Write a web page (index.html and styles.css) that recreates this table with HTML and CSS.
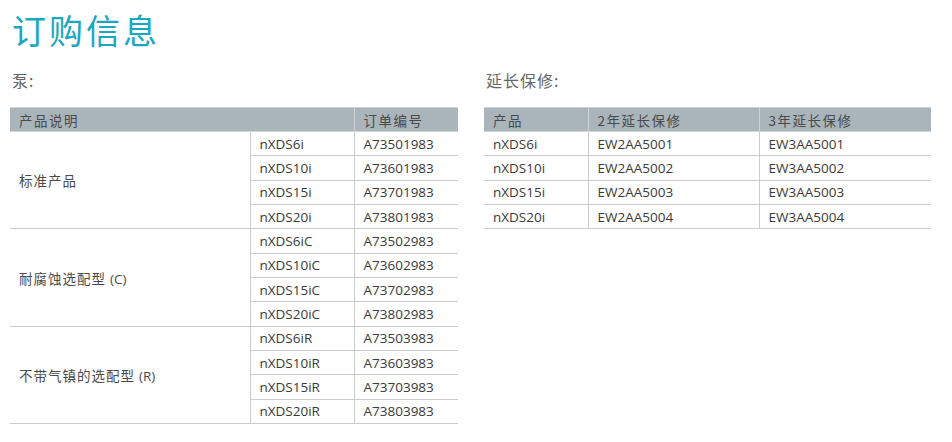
FILE: index.html
```html
<!DOCTYPE html>
<html lang="zh-CN">
<head>
<meta charset="utf-8">
<title>订购信息</title>
<link rel="stylesheet" href="styles.css">
</head>
<body>
<div class="page">
  <h1 class="title">订购信息</h1>
  <div class="columns">
    <section class="block block-left">
      <h2 class="heading">泵:</h2>
      <table class="tbl">
        <colgroup><col class="c1"><col class="c2"><col class="c3"></colgroup>
        <thead>
          <tr><th colspan="2">产品说明</th><th class="sep">订单编号</th></tr>
        </thead>
        <tbody>
          <tr class="grp"><td rowspan="4" class="desc">标准产品</td><td class="sep">nXDS6i</td><td class="sep">A73501983</td></tr>
          <tr><td class="sep">nXDS10i</td><td class="sep">A73601983</td></tr>
          <tr><td class="sep">nXDS15i</td><td class="sep">A73701983</td></tr>
          <tr><td class="sep">nXDS20i</td><td class="sep">A73801983</td></tr>
          <tr class="grp"><td rowspan="4" class="desc">耐腐蚀选配型 <span class="lat">(C)</span></td><td class="sep">nXDS6iC</td><td class="sep">A73502983</td></tr>
          <tr><td class="sep">nXDS10iC</td><td class="sep">A73602983</td></tr>
          <tr><td class="sep">nXDS15iC</td><td class="sep">A73702983</td></tr>
          <tr><td class="sep">nXDS20iC</td><td class="sep">A73802983</td></tr>
          <tr class="grp"><td rowspan="4" class="desc">不带气镇的选配型 <span class="lat">(R)</span></td><td class="sep">nXDS6iR</td><td class="sep">A73503983</td></tr>
          <tr><td class="sep">nXDS10iR</td><td class="sep">A73603983</td></tr>
          <tr><td class="sep">nXDS15iR</td><td class="sep">A73703983</td></tr>
          <tr><td class="sep">nXDS20iR</td><td class="sep">A73803983</td></tr>
        </tbody>
      </table>
    </section>
    <section class="block block-right">
      <h2 class="heading">延长保修:</h2>
      <table class="tbl">
        <colgroup><col class="r1"><col class="r2"><col class="r3"></colgroup>
        <thead>
          <tr><th>产品</th><th class="sep">2年延长保修</th><th class="sep">3年延长保修</th></tr>
        </thead>
        <tbody>
          <tr><td>nXDS6i</td><td class="sep">EW2AA5001</td><td class="sep">EW3AA5001</td></tr>
          <tr><td>nXDS10i</td><td class="sep">EW2AA5002</td><td class="sep">EW3AA5002</td></tr>
          <tr><td>nXDS15i</td><td class="sep">EW2AA5003</td><td class="sep">EW3AA5003</td></tr>
          <tr><td>nXDS20i</td><td class="sep">EW2AA5004</td><td class="sep">EW3AA5004</td></tr>
        </tbody>
      </table>
    </section>
  </div>
</div>
</body>
</html>
```

FILE: styles.css
```css
html, body {
  margin: 0;
  padding: 0;
  background: #ffffff;
}

.page {
  padding: 10px 0 0 10px;
  font-family: "Open Sans", "Noto Sans CJK SC", sans-serif;
  color: #3f3f3f;
}

.title {
  margin: 0 0 0 2px;
  font-family: "Noto Sans CJK SC", sans-serif;
  font-weight: 400;
  font-size: 34px;
  line-height: 40px;
  letter-spacing: 3px;
  color: #1ba7c1;
}

.columns {
  display: flex;
  gap: 26px;
  margin-top: 20px;
}

.block-left { width: 448px; }
.block-right { width: 447px; }

.heading {
  margin: 0 0 0 2px;
  font-family: "Noto Sans CJK SC", sans-serif;
  font-weight: 400;
  font-size: 16px;
  line-height: 20px;
  letter-spacing: 1px;
  color: #666666;
}

.tbl {
  margin-top: 17px;
  width: 100%;
  border-collapse: collapse;
  table-layout: fixed;
  font-size: 13.5px;
}

.c1 { width: 240px; }
.c2 { width: 104px; }
.c3 { width: 104px; }
.r1 { width: 104px; }
.r2 { width: 171px; }
.r3 { width: 172px; }

.tbl th {
  background: #a9b4bb;
  border-top: 1px solid #cdd3d7;
  border-bottom: 1px solid #cdd3d7;
  height: 23px;
  padding: 0 9px;
  text-align: left;
  font-family: "Noto Sans CJK SC", sans-serif;
  font-weight: 400;
  font-size: 13.5px;
  letter-spacing: 1.5px;
  color: #4a4a4a;
}

.tbl th.sep {
  border-left: 1px solid #cdd3d7;
}

.tbl td {
  height: 23.35px;
  padding: 0 9px;
  border-bottom: 1px solid #cccccc;
  text-align: left;
  vertical-align: middle;
  color: #3a3a3a;
  white-space: nowrap;
}

.tbl td.sep {
  border-left: 1px solid #cccccc;
}

.tbl td.desc {
  font-family: "Noto Sans CJK SC", sans-serif;
  font-size: 13.5px;
  letter-spacing: 1px;
  color: #4a4a4a;
}

.lat {
  font-family: "Open Sans", sans-serif;
  letter-spacing: 0;
}
```
